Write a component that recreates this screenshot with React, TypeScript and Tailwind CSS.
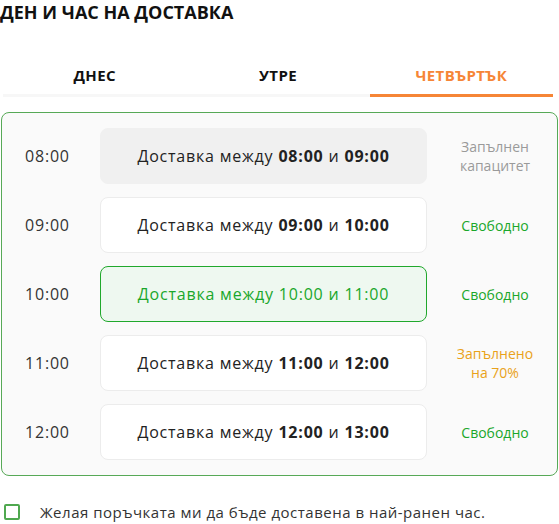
import { useState } from "react";

type Slot = {
  time: string;
  from: string;
  to: string;
  status: "full" | "free" | "partial";
  label: string;
};

const slots: Slot[] = [
  { time: "08:00", from: "08:00", to: "09:00", status: "full", label: "Запълнен капацитет" },
  { time: "09:00", from: "09:00", to: "10:00", status: "free", label: "Свободно" },
  { time: "10:00", from: "10:00", to: "11:00", status: "free", label: "Свободно" },
  { time: "11:00", from: "11:00", to: "12:00", status: "partial", label: "Запълнено на 70%" },
  { time: "12:00", from: "12:00", to: "13:00", status: "free", label: "Свободно" },
];

const tabs = ["Днес", "Утре", "Четвъртък"];

export default function App() {
  const [tab, setTab] = useState(2);
  const [selected, setSelected] = useState("10:00");
  const [earliest, setEarliest] = useState(false);

  return (
    <div
      className="w-[559px] bg-white text-[#222]"
      style={{ fontFamily: '"Open Sans", "Noto Sans", sans-serif' }}
    >
      <h1 className="h-6 text-[18px] leading-6 font-bold text-[#111]">ДЕН И ЧАС НА ДОСТАВКА</h1>

      {/* Табове */}
      <div className="mt-[31px] ml-[3px] w-[550px] flex bg-[linear-gradient(to_top,#f7f7f7_3px,transparent_3px)]">
        {tabs.map((t, i) => (
          <button
            key={t}
            type="button"
            onClick={() => setTab(i)}
            className={
              "flex-1 pt-[10px] pb-[9px] border-b-[3px] text-[15px] leading-5 font-bold uppercase tracking-[0.4px] " +
              (tab === i ? "border-[#f68536] text-[#f68536]" : "border-transparent text-[#111]")
            }
          >
            {t}
          </button>
        ))}
      </div>

      {/* Часове */}
      <div className="mt-[15px] ml-[1px] w-[557px] rounded-lg border border-[#57a957] bg-[#fafafa] py-[15px] flex flex-col gap-[13px]">
        {slots.map((s) => {
          const isSel = selected === s.time;
          const disabled = s.status === "full";
          return (
            <div key={s.time} className="flex items-center h-[56px]">
              <div className="w-[98px] pl-[23px] text-[16px] text-[#333] tracking-[0.8px]">{s.time}</div>
              <button
                type="button"
                disabled={disabled}
                onClick={() => setSelected(s.time)}
                className={
                  "w-[327px] h-[56px] rounded-lg border text-[16px] tracking-[0.8px] " +
                  (disabled
                    ? "bg-[#f0f0f0] border-[#f0f0f0] text-[#222]"
                    : isSel
                      ? "bg-[#eef8f0] border-[#20a82c] text-[#1aa72b]"
                      : "bg-white border-[#ececec] text-[#222]")
                }
              >
                Доставка между{" "}
                {isSel ? (
                  <>{s.from} и {s.to}</>
                ) : (
                  <>
                    <b className="font-bold">{s.from}</b> и <b className="font-bold">{s.to}</b>
                  </>
                )}
              </button>
              <div
                className={
                  "flex-1 pl-[26px] pr-[20px] text-center text-[14px] leading-[19px] " +
                  (s.status === "full"
                    ? "text-[#9a9a9a]"
                    : s.status === "partial"
                      ? "text-[#e9a21a]"
                      : "text-[#1aa72b]")
                }
              >
                {s.label}
              </div>
            </div>
          );
        })}
      </div>

      <label className="mt-[25px] flex items-center gap-[20px] pl-[4px] cursor-pointer">
        <span
          onClick={() => setEarliest(!earliest)}
          className={
            "w-4 h-4 shrink-0 rounded-[2px] border-2 border-[#4fa84f] " + (earliest ? "bg-[#4fa84f]" : "bg-white")
          }
        />
        <span className="text-[15px] tracking-[0.5px] text-[#333]">Желая поръчката ми да бъде доставена в най-ранен час.</span>
      </label>
    </div>
  );
}
